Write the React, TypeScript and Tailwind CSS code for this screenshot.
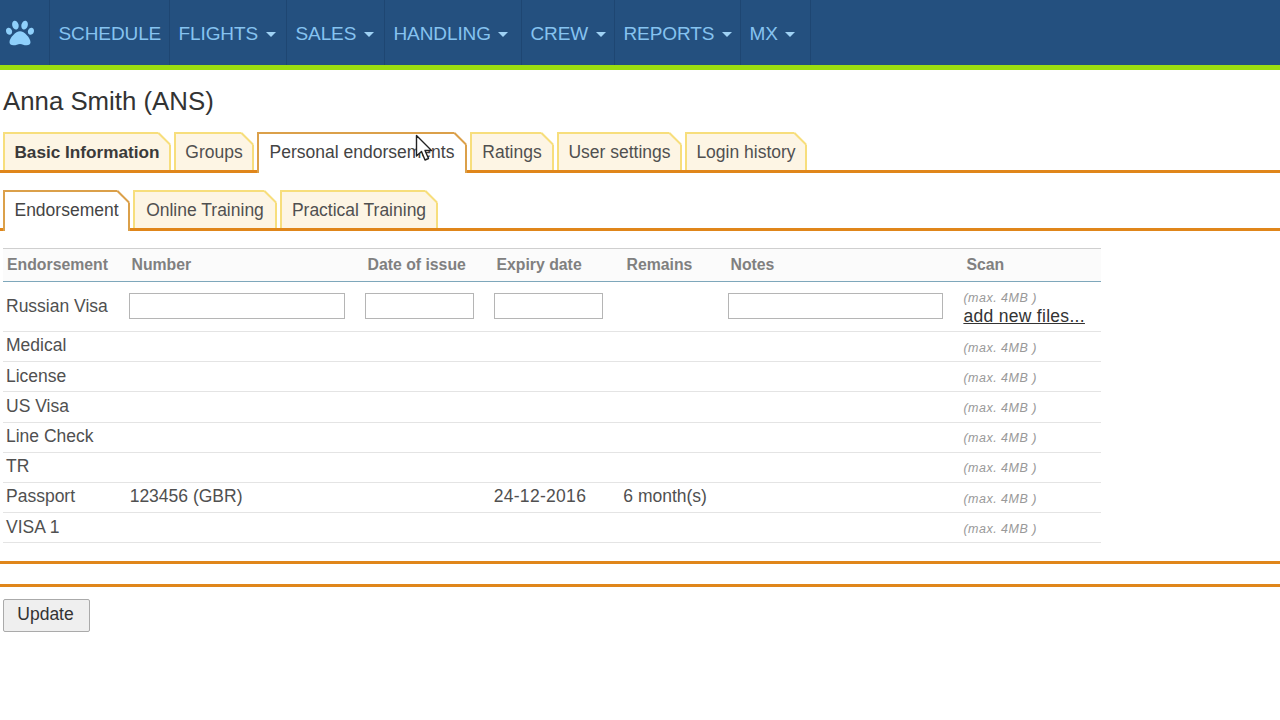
import React from "react";
import { FaPaw } from "react-icons/fa";

const nav: [string, boolean, string][] = [
  ["SCHEDULE", false, "w-[120px]"],
  ["FLIGHTS", true, "w-[117px]"],
  ["SALES", true, "w-[98px]"],
  ["HANDLING", true, "w-[137px]"],
  ["CREW", true, "w-[93px]"],
  ["REPORTS", true, "w-[126px]"],
  ["MX", true, "w-[70px]"],
];

function Tab({ label, active, bold, w }: { label: string; active?: boolean; bold?: boolean; w: string }) {
  return (
    <div
      className={`relative ${w} shrink-0 border-t-2 border-l-2 border-r-2 flex items-center justify-center ${
        active
          ? "border-[#dba04a] bg-white text-[#444] h-[41px] -mb-[3px] z-10"
          : "border-[#f7de7c] bg-[#fdf5e4] text-[#505050] h-[38px]"
      } ${bold ? "font-bold text-[17.2px]" : "text-[17.5px]"}`}
    >
      <span className={`whitespace-nowrap ${active ? "pb-[2px]" : "pt-[1px]"} ${bold ? "text-[#3a3a3a]" : ""}`}>{label}</span>
      <svg className="absolute -top-[2px] -right-[2px]" width="13" height="13" viewBox="0 0 13 13">
        <path d="M0 0H13V13Z" fill="#fff" />
        <path d="M0.5 1L12 12.5" stroke={active ? "#dba04a" : "#f7de7c"} strokeWidth="2" fill="none" />
      </svg>
    </div>
  );
}

const cols = ["w-[124px]", "w-[236px]", "w-[129px]", "w-[130px]", "w-[104px]", "w-[236px]", "w-[139px]"];

function Row({ name, number, expiry, remains }: { name: string; number?: string; expiry?: string; remains?: string }) {
  return (
    <div className="flex h-[30.2px] items-center border-b border-[#e4e4e4] text-[17.5px] text-[#505050] pl-[3px]">
      <div className={`${cols[0]} pb-[2px]`}>{name}</div>
      <div className={`${cols[1]} whitespace-nowrap pb-[2px]`}>{number}</div>
      <div className={cols[2]} />
      <div className={`${cols[3]} whitespace-nowrap pb-[2px] tracking-[0.3px]`}>{expiry}</div>
      <div className={`${cols[4]} whitespace-nowrap pb-[2px]`}>{remains}</div>
      <div className={cols[5]} />
      <div className={`${cols[6]} pl-[1px] pt-[3px] text-[12.5px] italic text-[#999] tracking-[0.5px]`}>(max. 4MB )</div>
    </div>
  );
}

function Input({ w, cls }: { w: string; cls?: string }) {
  return <div className={`${w} h-[26px] -mt-[2px] border border-[#b5b5b5] bg-white ${cls ?? ""}`} />;
}

export default function App() {
  return (
    <div className="relative h-[720px] w-[1280px] overflow-hidden bg-white font-['Liberation_Sans',Arial,sans-serif]">
      <header className="flex h-[70px] items-stretch border-b-[5px] border-[#9bdd10] bg-[#24507f]">
        <div className="flex w-[50px] items-center justify-start border-r border-[#1e4672] pl-[6px] text-[#8fd0fb]">
          <FaPaw size={28} />
        </div>
        {nav.map(([label, caret, w]) => (
          <div key={label} className={`flex ${w} items-center gap-[7px] border-r border-[#1e4672] pl-[8.5px] pt-[3px] text-[19px] tracking-[-0.1px] text-[#86c3f0]`}>
            <span>{label}</span>
            {caret && <span className="ml-[0.5px] h-0 w-0 border-x-[5px] border-t-[5px] border-x-transparent border-t-[#9fd2f5]" />}
          </div>
        ))}
      </header>

      <h1 className="mt-[15px] pl-[3px] text-[25.8px] leading-[32px] text-[#333]">Anna Smith (ANS)</h1>

      <div className="mt-[16px] flex gap-[3px] border-b-[3px] border-[#e0861a] pl-[3px] h-[40px] items-end">
        <Tab label="Basic Information" bold w="w-[168px]" />
        <Tab label="Groups" w="w-[80px]" />
        <Tab label="Personal endorsements" active w="w-[210px]" />
        <Tab label="Ratings" w="w-[84px]" />
        <Tab label="User settings" w="w-[125px]" />
        <Tab label="Login history" w="w-[122px]" />
      </div>

      <div className="mt-[18px] flex gap-[3px] border-b-[3px] border-[#e0861a] pl-[3px] h-[40px] items-end">
        <Tab label="Endorsement" active w="w-[127px]" />
        <Tab label="Online Training" w="w-[144px]" />
        <Tab label="Practical Training" w="w-[158px]" />
      </div>

      <div className="ml-[3px] mt-[17px] w-[1098px]">
        <div className="flex h-[34px] items-center border-y border-t-[#cfcfcf] border-b-[#7ea7bb] bg-[#fbfbfb] pl-[4px] pb-[1px] text-[15.8px] font-bold text-[#808080]">
          <div className="w-[124.5px]">Endorsement</div>
          <div className={cols[1]}>Number</div>
          <div className={cols[2]}>Date of issue</div>
          <div className={cols[3]}>Expiry date</div>
          <div className={cols[4]}>Remains</div>
          <div className={cols[5]}>Notes</div>
          <div className="w-[130px]">Scan</div>
        </div>
        <div className="flex h-[50px] items-center border-b border-[#e4e4e4] pl-[3px] text-[17.5px] text-[#505050]">
          <div className={cols[0]}>Russian Visa</div>
          <div className={cols[1]}><Input w="w-[216px]" cls="-ml-[1px]" /></div>
          <div className={cols[2]}><Input w="w-[109px]" /></div>
          <div className={cols[3]}><Input w="w-[109px]" /></div>
          <div className={cols[4]} />
          <div className={cols[5]}><Input w="w-[215px]" cls="ml-[1px]" /></div>
          <div className={`${cols[6]} pl-[1px] pt-[3px]`}>
            <div className="text-[12.5px] italic leading-[15px] text-[#999] tracking-[0.5px]">(max. 4MB )</div>
            <div className="text-[17.5px] leading-[20px] text-[#333] underline tracking-[0.3px]">add new files...</div>
          </div>
        </div>
        <Row name="Medical" />
        <Row name="License" />
        <Row name="US Visa" />
        <Row name="Line Check" />
        <Row name="TR" />
        <Row name="Passport" number="123456 (GBR)" expiry="24-12-2016" remains="6 month(s)" />
        <Row name="VISA 1" />
      </div>

      <div className="mt-[17.8px] h-[3px] bg-[#e0861a]" />
      <div className="mt-[20px] h-[3px] bg-[#e0861a]" />

      <button className="ml-[3px] mt-[12px] h-[33px] w-[87px] rounded-[2px] border border-[#aaa] bg-[#efefef] pb-[3px] pr-[2px] text-[17.5px] text-[#333]">
        Update
      </button>

      <svg className="absolute left-[415px] top-[134px] z-20" width="19" height="29" viewBox="0 0 19 29">
        <path d="M1.5 1.5V22L6.5 17.5L10 26L13.5 24.5L10 16.5H16.5Z" fill="#fff" stroke="#222" strokeWidth="1.4" strokeLinejoin="round" />
      </svg>
    </div>
  );
}
